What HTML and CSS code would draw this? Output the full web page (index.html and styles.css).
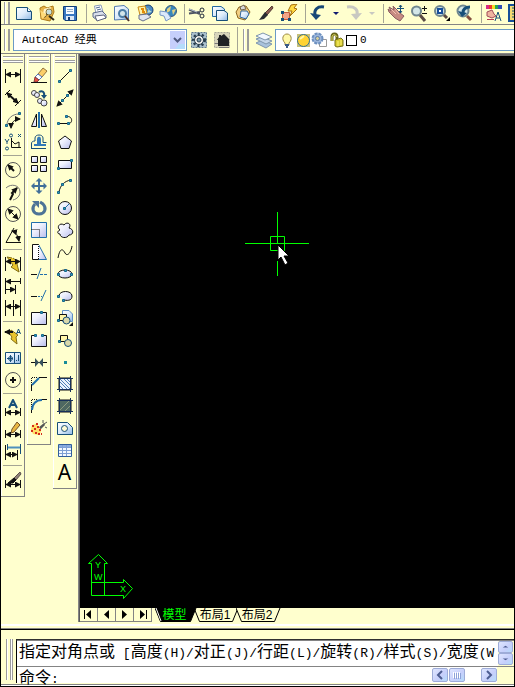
FILE: index.html
```html
<!DOCTYPE html>
<html lang="zh-CN">
<head>
<meta charset="utf-8">
<title>AutoCAD</title>
<link rel="stylesheet" href="styles.css">
</head>
<body>
<svg class="defs" aria-hidden="true">
  <defs>
    <linearGradient id="glass" x1="0" y1="0" x2="1" y2="1"><stop offset="0" stop-color="#fff"/><stop offset=".5" stop-color="#dcebfa"/><stop offset="1" stop-color="#8fb8e4"/></linearGradient>
    <linearGradient id="lilac" x1="0" y1="0" x2="1" y2="1"><stop offset="0" stop-color="#fff"/><stop offset=".4" stop-color="#eef0fd"/><stop offset="1" stop-color="#b9bdec"/></linearGradient>
    <marker id="tip" viewBox="0 0 6 6" refX="5" refY="3" markerWidth="6" markerHeight="6" markerUnits="userSpaceOnUse" orient="auto-start-reverse"><path d="M0 0L6 3L0 6z" fill="#111" stroke="none"/></marker>
  </defs>
</svg>
<div class="app">
  <header class="bar standard">
    <span class="grip"></span>
    <button aria-label="新建"><svg viewBox="0 0 18 18"><path d="M1.500 3.500H12L16.500 7.500V15.500H1.500z" fill="url(#glass)" stroke="#174f79"/><path d="M12.500 3.500V7.500H16" fill="#fff" stroke="#174f79"/></svg></button>
    <button aria-label="打开"><svg viewBox="0 0 18 18"><path d="M2 4L6 2L9 4L15 2L16 8L12 17L3 15z" fill="#e8b448" stroke="#ad7917"/><path d="M6 5L13 3L11 9L4 14z" fill="#fff4c9"/><circle cx="11" cy="8" r="3" fill="#c7dfdc" stroke="#8d7b41"/><path d="M9 10L6 13M11 12L16 16" stroke="#332b16" stroke-width="2"/><path d="M2 6L4 15L9 11" fill="#ffdb79"/></svg></button>
    <button aria-label="保存"><svg viewBox="0 0 18 18"><path d="M2.500 2.500H15.500V16.500H4L2.500 15z" fill="#3979c1" stroke="#133e78"/><path d="M5 3H13V10H5z" fill="#f8fcff"/><path d="M6 5.500H12M6 7.500H12" stroke="#91acc8"/><path d="M5 12H13V16H5z" fill="#dce8f6"/><path d="M7 13H9V16H7z" fill="#133e78"/></svg></button>
    <span class="rule"></span>
    <button aria-label="打印"><svg viewBox="0 0 18 18"><path d="M4.500 2L11 1L13 8L6 10z" fill="#fff" stroke="#8b9bb9"/><path d="M6 4L10 3M7 6L11 5" stroke="#4a6690"/><path d="M3 9L12 7L16 11V14L7 16L3 13z" fill="#d9dfec" stroke="#59698a"/><path d="M5 12L14 11L16 14L7 17z" fill="#fff" stroke="#5d647c"/></svg></button>
    <button aria-label="打印预览"><svg viewBox="0 0 18 18"><path d="M1.500 2.500L11 1.500L15.500 5V15L1.500 16z" fill="url(#glass)" stroke="#527aae"/><circle cx="9.500" cy="9.500" r="3.500" fill="#d3e5ea" stroke="#4c7da5" stroke-width="2"/><path d="M12 12L16 17" stroke="#4b302a" stroke-width="2"/></svg></button>
    <button aria-label="发布"><svg viewBox="0 0 18 18"><circle cx="12" cy="6" r="5" fill="#4b8ac4" stroke="#183d6c"/><path d="M9 3L13 5L11 9L16 8" fill="#b9ddd0"/><path d="M2 3L9 2L11 9L4 11z" fill="#fff2a8" stroke="#c98912"/><path d="M5 5H7V8H9" stroke="#e38b07" fill="none" stroke-width="2"/><path d="M3 11L11 10L15 13L7 17L3 15z" fill="#e1e5ee" stroke="#66708b"/></svg></button>
    <button aria-label="三维发布"><svg viewBox="0 0 18 18"><circle cx="12" cy="7" r="5.500" fill="#3788bd" stroke="#385a7a"/><path d="M8 5L12 2L11 7L8 9M13 6L17 5L14 11z" fill="#ded084"/><path d="M1 7L8 8L12 14L7 17L5 12L1 11z" fill="#dce9fb" stroke="#7897c5"/></svg></button>
    <span class="rule"></span>
    <button aria-label="剪切"><svg viewBox="0 0 18 18" fill="none"><path d="M1 5.500L12 10M1 9.500L12 8" stroke="#4b5262" stroke-width="2"/><path d="M1 5L9 8" stroke="#b7c2cf"/><circle cx="14" cy="6" r="2" stroke="#1d2738"/><circle cx="14" cy="12" r="2" stroke="#1d2738"/></svg></button>
    <button aria-label="复制"><svg viewBox="0 0 18 18"><path d="M1.500 2.500H10L13.500 5V12.500H1.500z" fill="url(#glass)" stroke="#2368a0"/><path d="M5.500 6.500H13L16.500 9V16.500H5.500z" fill="url(#glass)" stroke="#174f79"/></svg></button>
    <button aria-label="粘贴"><svg viewBox="0 0 18 18"><path d="M5 3L12 2L16 8L11 16L4 14L2 8z" fill="#f2cf83" stroke="#8d651e"/><path d="M6 3L10 1L12 5L7 6z" fill="#d7d8d9" stroke="#70634c"/><path d="M7 7H13L15 10L12 15L6 13z" fill="url(#glass)" stroke="#31679d"/></svg></button>
    <button aria-label="特性匹配"><svg viewBox="0 0 18 18"><path d="M15 2L8 9L10 11L16 4z" fill="#8d5b52" stroke="#543b34"/><path d="M8 8L11 11L7 15L2 16L5 12z" fill="#292c31"/></svg></button>
    <button aria-label="块编辑器"><svg viewBox="0 0 18 18"><path d="M2.500 8.500H9.500V15.500H2.500z" fill="#f3a487" stroke="#c05a3c"/><path d="M1 7H4V10H1zM8 14H11V17H8zM1 14H4V17H1z" fill="#174f79"/><path d="M11 1L17 0L14 4L17 5L10 12L12 7L8 7z" fill="#ffda42" stroke="#a56e0c"/></svg></button>
    <span class="rule"></span>
    <button aria-label="放弃"><svg viewBox="0 0 18 18"><path d="M15 3C8 2 5 6 6 11" fill="none" stroke="#174776" stroke-width="3"/><path d="M1 9L12 11L7 16z" fill="#174776"/></svg></button>
    <button class="caret" aria-label="放弃列表"><svg viewBox="0 0 8 18"><path d="M1 8H7L4 11z" fill="#101a70"/></svg></button>
    <button aria-label="重做"><svg viewBox="0 0 18 18"><path d="M2 3C10 2 13 6 12 10" fill="none" stroke="#c8c8c1" stroke-width="3"/><path d="M6 10L17 9L11 16z" fill="#c8c8c1"/></svg></button>
    <button class="caret" aria-label="重做列表"><svg viewBox="0 0 8 18"><path d="M1 8H7L4 11z" fill="#c8c8c1"/></svg></button>
    <span class="rule"></span>
    <button aria-label="实时平移"><svg viewBox="0 0 18 18"><path d="M1 5L4 7L2 3L7 6L6 2L10 6L13 9L17 12L13 17L8 14L2 8z" fill="#c78b82" stroke="#8a5d62"/><path d="M4 5L9 10M8 5L12 10" stroke="#f2c0ae"/><path d="M13.500 1V9M10 4.500H17" stroke="#174f79"/><path d="M12 3L13.500 1L15 3M12 7L13.500 9L15 7" fill="none" stroke="#174f79"/></svg></button>
    <button aria-label="实时缩放"><svg viewBox="0 0 18 18"><circle cx="6.500" cy="7" r="4.500" fill="#d3e7e8" stroke="#70878f" stroke-width="2"/><path d="M10 11L15 17" stroke="#5a4b45" stroke-width="3"/><path d="M14.500 2V7M12 4.500H17M12 9.500H17" stroke="#111"/></svg></button>
    <button aria-label="窗口缩放"><svg viewBox="0 0 18 18"><circle cx="7" cy="7" r="5" fill="#d3e7e8" stroke="#70878f" stroke-width="2"/><path d="M5 5H9V9H5z" fill="#fff" stroke="#174f9a" stroke-width="2"/><path d="M11 11L14 14" stroke="#5a4b45" stroke-width="3"/><path d="M17 13V17H13z"/></svg></button>
    <button aria-label="缩放上一个"><svg viewBox="0 0 18 18"><circle cx="7" cy="7" r="5.500" fill="#d3e7e8" stroke="#70878f" stroke-width="2"/><path d="M14 3C9 3 7 5 7 9" stroke="#174f79" fill="none" stroke-width="3"/><path d="M2 7L11 9L6 13z" fill="#174f79"/><path d="M11 12L15 16" stroke="#84503f" stroke-width="3"/></svg></button>
    <span class="rule"></span>
    <button aria-label="特性"><svg viewBox="0 0 18 18"><path d="M1 1H4V5H1z" fill="#d82b87"/><path d="M4 1H7V5H4z" fill="#e7382d"/><path d="M7 1H10V5H7z" fill="#f2de21"/><path d="M10 1H13V5H10z" fill="#22a850"/><path d="M13 1H17V5H13z" fill="#314db8"/><path d="M2 8L7 6L9 10L11 12L7 14L2 12z" fill="#efb39f" stroke="#a24c5b"/><path d="M2 15.500H9" stroke="#b63d55"/><path d="M10 17L13 8L16 17M11 14H15" fill="none" stroke="#174f79"/></svg></button>
    <button aria-label="设计中心"><svg viewBox="0 0 18 18"><path d="M1 1H17V17H1z" fill="#f5da72" stroke="#174f9a" stroke-width="2"/><path d="M4 4H10M4 7H8M4 10H10M4 13H8" stroke="#174f79"/></svg></button>
  </header>
  <div class="bar workspace">
    <span class="grip"></span>
    <label class="combo space"><select aria-label="工作空间"><option>AutoCAD 经典</option></select><svg class="drop" viewBox="0 0 15 18"><path d="M0 0H15V18H0z" fill="#c6cffb"/><path d="M9 13H15V18H5z" fill="#b4dcfb"/><path d="M4 7L7.500 10.500L11 7" fill="none" stroke="#505a80" stroke-width="2"/></svg></label>
    <button aria-label="工作空间设置"><svg viewBox="0 0 18 18"><path d="M1.500 1.500H16.500V16.500H1.500z" fill="#a9c0cc" stroke="#5f7a90" stroke-dasharray="2 1"/><circle cx="9" cy="9" r="5.500" fill="none" stroke="#273d4d" stroke-width="3" stroke-dasharray="2 2"/><circle cx="9" cy="9" r="4.500" fill="#f2f2ee" stroke="#273d4d"/><circle cx="9" cy="9" r="2" fill="#7696a5" stroke="#273d4d"/></svg></button>
    <button aria-label="我的工作空间"><svg viewBox="0 0 18 18"><path d="M1.500 1.500H16.500V16.500H1.500z" fill="#d7d5bb" stroke="#a8a999" stroke-dasharray="2 1"/><path d="M4 9L6 6V4H8V5L11 3L16 8V15H5V9z" fill="#202326"/><path d="M2 12.500H5M6 16.500H16" stroke="#777"/></svg></button>
    <span class="rule"></span>
    <span class="grip second"></span>
    <button aria-label="图层特性管理器"><svg viewBox="0 0 18 18" stroke="#7f96ad"><path d="M1 12L7 9L17 13L11 17z" fill="#a8c2dc"/><path d="M1 8L7 6L17 10L11 13z" fill="#c5d7ea"/><path d="M1 5L8 2L17 6L10 9z" fill="#f2f8ff"/></svg></button>
    <label class="combo layer"><select aria-label="图层"><option>0</option></select>
      <span class="states">
        <svg viewBox="0 0 16 18"><path d="M6 12C2 8 4 3 8 3S14 8 10 12V14H6z" fill="#fff9a8" stroke="#9d8944"/><path d="M6 14H10M7 16H9" stroke="#3b5a87" stroke-width="2"/></svg>
        <svg viewBox="0 0 16 18"><path d="M2 3H15V16H2z" fill="#c8c17b"/><circle cx="8.500" cy="9.500" r="6" fill="#ffd332" stroke="#367194"/><path d="M5 8L9 5" stroke="#fff7a7" stroke-width="2"/></svg>
        <svg viewBox="0 0 16 18"><path d="M8.500 8.500H15.500V15.500H8.500z" fill="#fff" stroke="#999"/><circle cx="6.500" cy="7.500" r="5" fill="#9cb6dc" stroke="#6d90bf" stroke-width="2" stroke-dasharray="3 1"/><circle cx="6.500" cy="7.500" r="2" fill="#d5cf9d" stroke="#577aac"/></svg>
        <svg class="lock" viewBox="0 0 16 18"><path d="M3 10V6C3 2 8 2 8 6V9" fill="none" stroke="#67641a" stroke-width="3"/><path d="M3 10V6C3 3 7 3 8 6" fill="none" stroke="#e2dc66"/><path d="M6 9L12 7L14 9V15L8 16L6 15z" fill="#d7cd32" stroke="#777019"/><path d="M9 10V15M12 9V14" stroke="#fff277"/></svg>
        <i class="swatch"></i>
      </span>
    </label>
  </div>

  <main>
    <nav class="palette" aria-label="标注">
      <span class="hgrip"></span>
      <button aria-label="线性"><svg viewBox="0 0 18 18" class="k"><path d="M1.500 2V16M16.500 2V16"/><path d="M2 7.500H16" marker-start="url(#tip)" marker-end="url(#tip)"/></svg></button>
      <button aria-label="对齐"><svg viewBox="0 0 18 18" class="k"><path d="M1 6L6 1M11 17L17 11"/><path d="M3 4L14 14" stroke-width="2" marker-start="url(#tip)" marker-end="url(#tip)"/></svg></button>
      <button aria-label="弧长"><svg viewBox="0 0 18 18" class="k"><path d="M3 14C3 8 8 3 15 3" stroke="#777"/><path d="M7 17C7 12 10 8 16 8" marker-start="url(#tip)" marker-end="url(#tip)"/><path class="node" d="M1.500 13.500H3.500V15.500H1.500zM14.500 1.500H16.500V3.500H14.500z"/></svg></button>
      <button aria-label="坐标"><svg viewBox="0 0 18 18" class="k"><path d="M7.500 5V14.500H17M8 8L11 11L15 9V15"/><path d="M1 6L3 9L5 6M3 9V11M14 1L17 4M17 1L14 4" stroke="#174f79"/><circle cx="7" cy="2.500" r="1.500" stroke="#174f79"/><circle cx="3" cy="15.500" r="1.500" stroke="#174f79"/></svg></button>
      <span class="hr"></span>
      <button aria-label="半径"><svg viewBox="0 0 18 18" class="k"><circle cx="9" cy="9" r="7.500" stroke="#555"/><path d="M10 10L4 4" stroke-width="2" marker-end="url(#tip)"/></svg></button>
      <button aria-label="折弯"><svg viewBox="0 0 18 18" class="k"><path d="M2 5C7 0 16 2 16 9C16 13 13 16 9 17" stroke="#777"/><path d="M6 17L9 11L8 10L13 5" stroke-width="2" marker-end="url(#tip)"/></svg></button>
      <button aria-label="直径"><svg viewBox="0 0 18 18" class="k"><circle cx="9" cy="9" r="7.500" stroke="#555"/><path d="M4 4L14 14" marker-start="url(#tip)" marker-end="url(#tip)"/></svg></button>
      <button aria-label="角度"><svg viewBox="0 0 18 18" class="k"><path d="M10 1L2 15.500H17"/><path d="M8 4C12 5 14 9 15 14" marker-start="url(#tip)" marker-end="url(#tip)"/></svg></button>
      <span class="hr"></span>
      <button aria-label="快速标注"><svg viewBox="0 0 18 18" class="k"><path d="M8 3L3 2L9 10L7 12L15 17L13 9L14 7L9 3" fill="#e9c52d" stroke="#826e16"/><path d="M1.500 2V16M16.500 2V16"/><path d="M2 6.500H16" marker-start="url(#tip)" marker-end="url(#tip)"/></svg></button>
      <button aria-label="基线"><svg viewBox="0 0 18 18" class="k"><path d="M1.500 1V17M16.500 1V7M11.500 8V17"/><path d="M2 4.500H16M2 12.500H11" marker-start="url(#tip)" marker-end="url(#tip)"/></svg></button>
      <button aria-label="连续"><svg viewBox="0 0 18 18" class="k"><path d="M1.500 1V17M9.500 1V17M16.500 1V17"/><path d="M2 7.500H9M10 7.500H16" marker-start="url(#tip)" marker-end="url(#tip)"/></svg></button>
      <span class="hr"></span>
      <button aria-label="快速引线"><svg viewBox="0 0 18 18" class="k"><path d="M7 3L5 6L8 10L7 12L13 17L12 10L14 8z" fill="#e9c52d" stroke="#826e16"/><path d="M9 5L1 5" stroke-width="2" marker-end="url(#tip)"/><path d="M12.500 7L14.500 2L16.500 7M13 5.500H16" stroke="#174f79"/></svg></button>
      <button aria-label="公差"><svg viewBox="0 0 18 18"><path d="M1.500 3.500H16.500V14.500H1.500z" fill="url(#glass)" stroke="#174f79"/><path d="M10.500 4V14M3 9.500H9M6.500 6V13M12 11.500H13M14.500 6V12" stroke="#174f79"/><circle cx="6.500" cy="9.500" r="2" fill="none" stroke="#174f79"/></svg></button>
      <button aria-label="圆心标记"><svg viewBox="0 0 18 18" class="k"><circle cx="9" cy="9" r="7.500" stroke="#555"/><path d="M9 6V12M6 9H12" stroke-width="2"/></svg></button>
      <span class="hr"></span>
      <button aria-label="编辑标注文字"><svg viewBox="0 0 18 18" class="k"><path d="M5 9L9 1L13 9M6 6H12" stroke="#174f79" stroke-width="2"/><path d="M1.500 9V17M16.500 9V17"/><path d="M2 13.500H16" marker-start="url(#tip)" marker-end="url(#tip)"/></svg></button>
      <button aria-label="编辑标注"><svg viewBox="0 0 18 18" class="k"><path d="M13 1L16 4L10 11L7 12L8 8z" fill="#e9b843" stroke="#745228"/><path d="M1.500 9V17M16.500 9V17"/><path d="M2 13.500H16" marker-start="url(#tip)" marker-end="url(#tip)"/></svg></button>
      <button aria-label="标注更新"><svg viewBox="0 0 18 18" class="k"><path d="M3.500 1V7M16.500 1V11" stroke="#174f79"/><path d="M4 4.500H16" stroke="#4f91bd" stroke-width="2"/><path d="M1.500 2V17M13.500 7V17"/><path d="M2 11.500H13" marker-start="url(#tip)" marker-end="url(#tip)"/></svg></button>
      <span class="hr"></span>
      <button aria-label="标注样式"><svg viewBox="0 0 18 18" class="k"><path d="M16 1L10 7L12 9L17 3z" fill="#8f8178" stroke="#5b504a"/><path d="M10 7L12 9L9 12H4z" fill="#111"/><path d="M1.500 9V17M16.500 9V17"/><path d="M2 13.500H16" marker-start="url(#tip)" marker-end="url(#tip)"/></svg></button>
    </nav>
    <nav class="palette" aria-label="修改">
      <span class="hgrip"></span>
      <button aria-label="删除"><svg viewBox="0 0 18 18"><path d="M13 1L17 4L12 10L8 7z" fill="#fbce69" stroke="#94713a"/><path d="M8 7L12 10L9 13L5 10z" fill="#fff" stroke="#5477b9"/><path d="M5 10L9 13L7 15H4z" fill="#e8503e" stroke="#843b41"/><path d="M1 15.500H17" stroke="#111"/></svg></button>
      <button aria-label="复制对象"><svg viewBox="0 0 18 18" fill="url(#lilac)" stroke="#444"><circle cx="4" cy="4" r="2.500"/><circle cx="7" cy="6" r="2.500"/><circle cx="10" cy="12" r="2.500"/><circle cx="14" cy="14" r="3"/><path d="M9 3C12 1 15 3 14 7" fill="none" stroke="#174f79" stroke-width="2"/><path d="M11 6L14 10L17 6z" fill="#174f79" stroke="none"/></svg></button>
      <button aria-label="镜像"><svg viewBox="0 0 18 18" class="k"><path d="M6.500 3V15.500H1.500zM11.500 3V15.500H16.500z" fill="url(#lilac)"/><path d="M9 1V17" stroke="#216fab" stroke-width="2"/></svg></button>
      <button aria-label="偏移"><svg viewBox="0 0 18 18" fill="none" stroke="#174f79"><path d="M1.500 15.500V11C1 9 3 8 5 8V5C5 1 13 1 13 5V9.500H16.500M16 15.500H1"/><path d="M4 12H8V6C8 4 10 4 10 6V12H16" stroke="#3279ba" stroke-width="2"/></svg></button>
      <button aria-label="阵列"><svg viewBox="0 0 18 18" fill="url(#lilac)" stroke="#111"><path d="M1.500 1.500H7.500V7.500H1.500z"/><path d="M10.500 1.500H16.500V7.500H10.500z"/><path d="M1.500 10.500H7.500V16.500H1.500z"/><path d="M10.500 10.500H16.500V16.500H10.500z"/></svg></button>
      <button aria-label="移动"><svg viewBox="0 0 18 18"><path d="M9 3V15M3 9H15" stroke="#416f99" stroke-width="2"/><path d="M5.500 4.500L9 1L12.500 4.500zM5.500 13.500L9 17L12.500 13.500zM4.500 5.500L1 9L4.500 12.500zM13.500 5.500L17 9L13.500 12.500z" fill="#416f99"/></svg></button>
      <button aria-label="旋转"><svg viewBox="0 0 18 18"><path d="M5 5C1 9 3 15 9 15C15 15 17 9 13 5L10 3" fill="none" stroke="#4d7396" stroke-width="3"/><path d="M2 2H9V9z" fill="#4d7396"/></svg></button>
      <button aria-label="缩放"><svg viewBox="0 0 18 18"><path d="M1.500 1.500H16.500V16.500H1.500z" fill="url(#lilac)" stroke="#216fab"/><path d="M1.500 8.500H9.500V16.500" fill="none" stroke="#111" stroke-dasharray="1 1"/></svg></button>
      <button aria-label="拉伸"><svg viewBox="0 0 18 18"><path d="M8.500 1.500L16.500 16.500H8.500z" fill="url(#lilac)" stroke="#216fab"/><path d="M8.500 1.500H2.500V16.500H8.500z" fill="#fff" stroke="#111"/><path d="M8.500 2V16" stroke="#fff" stroke-dasharray="1 1"/></svg></button>
      <button aria-label="修剪"><svg viewBox="0 0 18 18" class="k"><path d="M1 9.500H7"/><path d="M10 9.500H17" stroke="#216fab" stroke-dasharray="3 1"/><path d="M7 14L11 3" stroke="#216fab"/></svg></button>
      <button aria-label="延伸"><svg viewBox="0 0 18 18" class="k"><path d="M1 9.500H7"/><path d="M8 9.500H12" stroke="#216fab" stroke-dasharray="2 1"/><path d="M11 14L16 3" stroke="#216fab"/></svg></button>
      <button aria-label="打断于点"><svg viewBox="0 0 18 18" class="k"><path d="M1.500 3.500H16.500V15.500H1.500z" fill="url(#lilac)"/><path class="node" d="M10.500 2.500H12.500V4.500H10.500z"/></svg></button>
      <button aria-label="打断"><svg viewBox="0 0 18 18" class="k"><path d="M2 4H16V15H2z" fill="url(#lilac)" stroke="none"/><path d="M5 4.500H1.500V15.500H16.500V4.500H13"/><path class="node" d="M4.500 3.500H6.500V5.500H4.500zM11.500 3.500H13.500V5.500H11.500z"/></svg></button>
      <button aria-label="合并"><svg viewBox="0 0 18 18"><path d="M1 9.500H17" stroke="#111"/><path d="M5 5L9 9.500L5 14zM13 5L9 9.500L13 14z" fill="#36505c"/></svg></button>
      <button aria-label="倒角"><svg viewBox="0 0 18 18" class="k"><path d="M1.500 16V10M9 2.500H17"/><path d="M1.500 10V2.500H8" stroke-dasharray="1 1"/><path d="M2 10L9 3" stroke="#216fab" stroke-width="2"/></svg></button>
      <button aria-label="圆角"><svg viewBox="0 0 18 18" class="k"><path d="M1.500 16V12M11 2.500H17"/><path d="M1.500 10V2.500H8" stroke-dasharray="1 1"/><path d="M2 13C2 7 6 3 12 3" stroke="#216fab" stroke-width="2"/></svg></button>
      <button aria-label="分解"><svg viewBox="0 0 18 18"><path d="M8 9L14 4L15 6L10 11z" fill="#555"/><path d="M13 1V4M17 3L14 5M15 8L17 9" stroke="#555"/><path d="M2 6L6 5L10 9L11 13L8 16L3 15L1 11z" fill="#ffe067"/><path d="M2 7H4M6 5H8M4 10H6M1 12H3M5 14H7M9 11H11M8 15H10M7 8H9M11 15H12" stroke="#d52c1b" stroke-width="2"/></svg></button>
    </nav>
    <nav class="palette" aria-label="绘图">
      <span class="hgrip"></span>
      <button aria-label="直线"><svg viewBox="0 0 18 18" class="k"><path d="M3 15L15 3"/><path class="node" d="M2.500 13.500H4.500V15.500H2.500zM13.500 2.500H15.500V4.500H13.500z"/></svg></button>
      <button aria-label="构造线"><svg viewBox="0 0 18 18" class="k"><path d="M1 17L17 1" marker-start="url(#tip)" marker-end="url(#tip)"/><path class="node" d="M5.500 10.500H7.500V12.500H5.500zM10.500 5.500H12.500V7.500H10.500z"/></svg></button>
      <button aria-label="多段线"><svg viewBox="0 0 18 18" class="k"><path d="M3 12.500H12C17 13 17 5 11 5.500"/><path class="node" d="M1.500 11.500H3.500V13.500H1.500zM9.500 4.500H11.500V6.500H9.500zM11.500 11.500H13.500V13.500H11.500z"/></svg></button>
      <button aria-label="正多边形"><svg viewBox="0 0 18 18" class="k"><path d="M9 3L15.500 8L13 15.500H5L2.500 8z" fill="url(#lilac)"/></svg></button>
      <button aria-label="矩形"><svg viewBox="0 0 18 18" class="k"><path d="M2.500 5.500H15.500V13.500H2.500z" fill="url(#lilac)"/><path class="node" d="M1.500 12.500H3.500V14.500H1.500zM14.500 4.500H16.500V6.500H14.500z"/></svg></button>
      <button aria-label="圆弧"><svg viewBox="0 0 18 18" class="k"><path d="M3 15C4 9 8 4 15 3"/><path class="node" d="M1.500 14.500H3.500V16.500H1.500zM5.500 6.500H7.500V8.500H5.500zM13.500 2.500H15.500V4.500H13.500z"/></svg></button>
      <button aria-label="圆"><svg viewBox="0 0 18 18" class="k"><circle cx="9" cy="9" r="6.500" fill="url(#lilac)"/><path d="M9 9L13 5" stroke="#216fab"/><path class="node" d="M7.500 8.500H9.500V10.500H7.500z"/></svg></button>
      <button aria-label="修订云线"><svg viewBox="0 0 18 18" class="k"><path d="M4 9C0 6 4 1 8 4C11 0 16 3 13 7C18 8 18 14 13 14C11 18 4 17 4 13C1 13 1 10 4 9z" fill="url(#lilac)"/></svg></button>
      <button aria-label="样条曲线"><svg viewBox="0 0 18 18" class="k"><path d="M2 15C4 4 7 6 9 10S15 10 16 3"/></svg></button>
      <button aria-label="椭圆"><svg viewBox="0 0 18 18" class="k"><ellipse cx="9" cy="9" rx="7" ry="4" fill="url(#lilac)"/><path class="node" d="M1.500 8.500H3.500V10.500H1.500zM8.500 4.500H10.500V6.500H8.500zM14.500 8.500H16.500V10.500H14.500z"/></svg></button>
      <button aria-label="椭圆弧"><svg viewBox="0 0 18 18" class="k"><path d="M3 9C3 3 16 3 16 9C16 13 13 14 8 13" fill="url(#lilac)"/><path class="node" d="M1.500 8.500H3.500V10.500H1.500zM6.500 12.500H8.500V14.500H6.500z"/></svg></button>
      <button aria-label="插入块"><svg viewBox="0 0 18 18" class="k"><path d="M6.500 1.500H13L16.500 5V12.500H6.500z" fill="url(#glass)" stroke="#5e8fc4"/><path d="M3.500 5.500H10.500V11.500H3.500z" fill="#fff6a9"/><circle cx="10.500" cy="11.500" r="3.500" fill="#d9d8aa" stroke="#174f79"/><path class="node" d="M1.500 10.500H3.500V12.500H1.500z"/><path d="M17 13V17H13z" fill="#111" stroke="none"/></svg></button>
      <button aria-label="创建块"><svg viewBox="0 0 18 18" class="k"><path d="M4.500 4.500H11.500V10.500H4.500z" fill="#fff6a9"/><circle cx="12" cy="12" r="3.500" fill="#d9d8aa" stroke="#174f79"/><path class="node" d="M2.500 9.500H4.500V11.500H2.500z"/></svg></button>
      <button aria-label="点"><svg viewBox="0 0 18 18"><path d="M8 8H11V11H8z" fill="#168c99"/></svg></button>
      <button aria-label="图案填充"><svg viewBox="0 0 18 18" class="k"><path d="M3 3H15V15H3z" fill="#e9f2fd"/><path d="M4 7L11 14M4 11L7 14M4 4L14 14M8 4L14 10M11 4L14 7" stroke="#4f7fb5"/><path d="M3.500 1V17M14.500 1V17M1 3.500H17M1 14.500H17" stroke="#17305a"/></svg></button>
      <button aria-label="渐变色"><svg viewBox="0 0 18 18" class="k"><path d="M3 3H15V15H3z" fill="#4e6862"/><path d="M4 13L13 4M9 14L14 9" stroke="#8d9a7d"/><path d="M3.500 1V17M14.500 1V17M1 3.500H17M1 14.500H17" stroke="#17305a"/></svg></button>
      <button aria-label="面域"><svg viewBox="0 0 18 18"><path d="M1.500 3.500H11.500L16.500 8.500V15.500H1.500z" fill="url(#glass)" stroke="#174f79"/><circle cx="8.500" cy="9.500" r="3" fill="#fffbd5" stroke="#174f79"/></svg></button>
      <button aria-label="表格"><svg viewBox="0 0 18 18"><path d="M2.500 3.500H15.500V15.500H2.500z" fill="#f3f9ff" stroke="#315e9c"/><path d="M3 4H15V6H3z" fill="#89acdf"/><path d="M3 6.500H15M3 9.500H15M3 12.500H15M6.500 4V15M10.500 4V15" stroke="#7e9fd4"/></svg></button>
      <button class="mtext" aria-label="多行文字">A</button>
    </nav>
    <section class="drawing">
      <div class="canvas">
        <svg class="cursor" viewBox="0 0 66 66"><path d="M0 31.500H27M30 31.500H64M32.500 0V27M32.500 49V64M25.500 24.500H39.500V38.500H25.500zM32.500 25V31M27 31.500H38" stroke="#0f0" fill="none"/><path d="M33 33V48L36 45L40 53L43 51L39 44H44z" fill="#fff" stroke="#000"/></svg>
        <svg class="ucs" viewBox="0 0 48 48"><path d="M3.500 43.500V11.500H.500L10.500 2.500L19.500 11.500H16.500V30.500H35.500V27.500L44.500 36.500L35.500 46.500V43.500zM3.500 30.500H16.500V43.500" fill="none" stroke="#0f0"/><g fill="#0f0"><text x="7" y="16">Y</text><text x="6" y="28">W</text><text x="32" y="40">X</text></g></svg>
      </div>
      <div class="sheets">
        <div class="steps">
          <button aria-label="第一个"><svg viewBox="0 0 17 13"><path d="M4 2H5V11H4zM11 2V11L6 6.500z"/></svg></button>
          <button aria-label="上一个"><svg viewBox="0 0 17 13"><path d="M11 2V11L6 6.500z"/></svg></button>
          <button aria-label="下一个"><svg viewBox="0 0 17 13"><path d="M6 2V11L11 6.500z"/></svg></button>
          <button aria-label="最后一个"><svg viewBox="0 0 17 13"><path d="M6 2V11L11 6.500zM12 2H13V11H12z"/></svg></button>
        </div>
        <button class="sheet active"><svg viewBox="0 0 46 14"><path d="M0 0L5.500 13.500H35.500L41 0" fill="#000" stroke="#000"/><path d="M1 0L6 13" stroke="#fff"/></svg><span>模型</span></button>
        <button class="sheet"><svg viewBox="0 0 46 14"><path d="M0 0L5.500 13.500H38.500L44 0" fill="#ffffce" stroke="#000"/></svg><span>布局1</span></button>
        <button class="sheet"><svg viewBox="0 0 46 14"><path d="M0 0L5.500 13.500H38.500L44 0" fill="#ffffce" stroke="#000"/></svg><span>布局2</span></button>
      </div>
    </section>
  </main>

  <footer>
    <span class="grip tall"></span>
    <div class="command">
      <div class="history">
        <p>指定对角点或<b> [</b>高度<b>(H)/</b>对正<b>(J)/</b>行距<b>(L)/</b>旋转<b>(R)/</b>样式<b>(S)/</b>宽度<b>(W</b></p>
        <div class="vscroll">
          <button aria-label="向上滚动"><svg viewBox="0 0 14 11"><path d="M4 6H10L7 4z"/></svg></button>
          <button aria-label="向下滚动"><svg viewBox="0 0 14 11"><path d="M4 5H10L7 7z"/></svg></button>
        </div>
      </div>
      <div class="entry">
        <label for="cmd">命令<b>:</b></label>
        <input id="cmd" type="text">
        <div class="hscroll">
          <button aria-label="向左滚动"><svg viewBox="0 0 14 12"><path d="M9 2L5 6L9 10" fill="none" stroke="#4d5d91" stroke-width="2"/></svg></button>
          <button aria-label="滚动块"><svg viewBox="0 0 14 12"><path d="M3.500 3V9M5.500 3V9M7.500 3V9M9.500 3V9" stroke="#fff"/><path d="M4.500 4V10M6.500 4V10M8.500 4V10M10.500 4V10" stroke="#8da2d8"/></svg></button>
          <button class="right" aria-label="向右滚动"><svg viewBox="0 0 14 12"><path d="M5 2L9 6L5 10" fill="none" stroke="#4d5d91" stroke-width="2"/></svg></button>
        </div>
      </div>
    </div>
  </footer>
</div>
</body>
</html>
```
FILE: styles.css
```css
* { box-sizing: border-box; }
body { margin: 0; background: #000; color: #000; font: 12px "Liberation Sans", "Noto Sans CJK SC", sans-serif; }
button { border: 0; padding: 0; background: none; color: inherit; font: inherit; flex: none; }
svg { display: block; }
.defs { position: absolute; width: 0; height: 0; }

.app {
  display: flex;
  flex-direction: column;
  height: 100vh;
  border: 1px solid #000;
  background: #ffffce;
  overflow: hidden;
}

/* Toolbars */
.bar { display: flex; align-items: center; flex: none; overflow: hidden; border-bottom: 1px solid #848484; }
.bar button { width: 23px; display: grid; place-items: center; }
.bar svg { width: 18px; height: 18px; }
.standard { height: 24px; padding-top: 1px; }
.workspace { height: 29px; padding-top: 2px; }
.grip { flex: none; width: 6px; height: 22px; margin: 0 3px; border: solid #9c9c9c; border-width: 0 1px; background: linear-gradient(90deg, #fff 1px, #ffffce 1px 3px, #9c9c9c 3px 4px, #fff 4px); }
.standard .grip { margin-right: 2px; }
.rule { flex: none; width: 1px; height: 19px; margin: 0 0 0 5px; background: #a5a594; }
.standard .caret { width: 13px; }
.standard .caret svg { width: 8px; }

.combo { position: relative; flex: none; height: 22px; border: 1px solid #6b9ac6; background: #fff; }
.combo select { display: block; width: 100%; height: 100%; border: 0; padding: 0 0 0 8px; appearance: none; background: #fff; color: #000; font: 11px "Liberation Mono", "Noto Sans CJK SC", monospace; }
.space { width: 174px; }
.bar .drop { position: absolute; top: 1px; right: 1px; width: 15px; height: 18px; pointer-events: none; }
.workspace .rule { height: 27px; margin: 0 5px 0 4px; }
.workspace .second { margin: 0 3px 0 0; }
.layer { flex: 1 0 240px; }
.layer select { padding-left: 84px; }
.states { position: absolute; left: 3px; top: 1px; display: flex; align-items: center; pointer-events: none; }
.bar .states svg { width: 16px; height: 18px; }
.bar .states .lock { margin-left: 2px; }
.swatch { width: 11px; height: 11px; margin-left: 1px; border: 1px solid #000; background: #fff; }

/* Tool palettes and the drawing */
main { flex: 1; min-height: 0; display: flex; align-items: flex-start; gap: 2px; }
.palette { flex: none; width: 24px; display: flex; flex-direction: column; align-items: center; padding: 2px 1px 5px; border: solid #848484; border-width: 0 1px 1px 0; box-shadow: inset 1px 0 #fff; }
.palette button { width: 18px; height: 22px; padding: 2px 0; }
.palette svg { width: 18px; height: 18px; }
.hgrip { width: 20px; height: 7px; margin-bottom: 2px; border: solid #9c9c9c; border-width: 1px 0; background: linear-gradient(#fff 1px, #ffffce 1px 3px, #9c9c9c 3px 4px, #fff 4px); }
.hr { width: 19px; height: 1px; margin: 2px 0 3px; background: #a5a594; }
.k { fill: none; stroke: #111; stroke-width: 1px; }
.node { fill: #2aa3b5; stroke: #17648c; stroke-width: 1px; }
.palette .mtext { font: 21px/18px "Noto Sans", sans-serif; }

.drawing { flex: 1; align-self: stretch; min-width: 0; display: flex; flex-direction: column; border-left: 1px solid #5a5a5a; box-shadow: -1px 0 #848484; }
.canvas { position: relative; flex: 1; background: #000; border-top: 2px solid #6a6a6a; }
.cursor { position: absolute; left: 165px; top: 156px; width: 66px; height: 66px; }
.ucs { position: absolute; left: 8px; bottom: 8px; width: 48px; height: 48px; font: 9px "Liberation Sans", sans-serif; }
.sheets { display: flex; height: 14px; }
.steps { display: flex; margin-right: 3px; }
.steps button { width: 18px; border: solid #848484; border-width: 0 1px 1px 0; }
.steps svg { width: 17px; height: 13px; }
.sheet { position: relative; width: 42px; height: 14px; line-height: 14px; }
.sheet svg { position: absolute; left: 0; top: 0; width: 46px; height: 14px; }
.sheet span { position: relative; }
.active { width: 39px; color: #0f0; z-index: 1; }

/* Command line */
footer { flex: none; display: flex; height: 64px; padding: 17px 0 3px; background: linear-gradient(#ffffce 2px, #fff 2px 4px, #ffffce 4px 6px, #848484 6px 7px, #000 7px 8px, #ffffce 8px calc(100% - 2px), #848484 calc(100% - 2px) calc(100% - 1px), #fff 0); }
.tall { height: 41px; margin: 0 3px 0 5px; width: 7px; }
.command { flex: 1; min-width: 0; display: flex; flex-direction: column; border: solid #000; border-width: 2px 0 0 1px; border-top: 2px groove #848484; background: #fff; font: 16px/18px "Noto Sans CJK SC", sans-serif; }
.command b { font: 13px/18px "Liberation Mono", monospace; white-space: pre; }
.history { display: flex; height: 26px; border-bottom: 1px solid #848484; }
.history p { flex: 1; min-width: 0; height: 25px; margin: 0; padding-left: 2px; white-space: nowrap; overflow: hidden; }
.vscroll { flex: none; width: 16px; background: #ffffce; }
.vscroll button, .hscroll button { border: 1px solid #9eacd8; border-radius: 2px; background: linear-gradient(135deg, #dfe6ff, #c6cffb 60%, #b4dcfb); }
.vscroll button { display: block; width: 15px; height: 12px; fill: #4d5d91; }
.vscroll svg { width: 13px; height: 10px; }
.entry { display: flex; flex: 1; min-height: 0; }
.entry label { padding-left: 2px; }
.entry input { flex: 1; min-width: 0; border: 0; padding: 0 4px; background: transparent; font: inherit; outline: 0; }
.hscroll { flex: none; display: flex; width: 83px; gap: 1px; padding: 1px 17px 1px 1px; background: linear-gradient(90deg, #fff 66px, #ffffce 0); }
.hscroll button { width: 16px; height: 14px; }
.hscroll svg { width: 14px; height: 12px; }
.hscroll .right { margin-left: auto; }
```
